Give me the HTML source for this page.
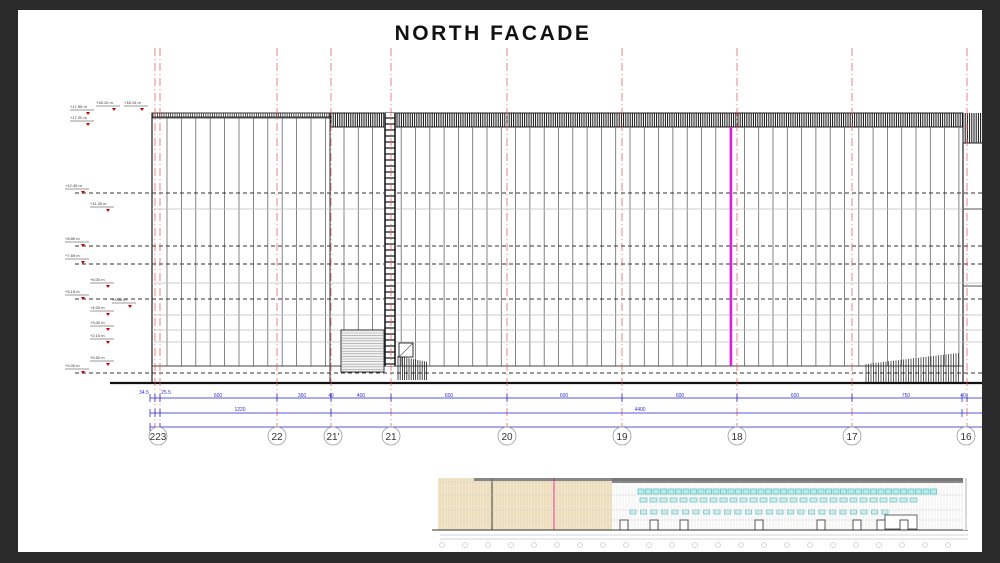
<!DOCTYPE html>
<html><head><meta charset="utf-8"><style>
html,body{margin:0;padding:0;background:#2b2b2b;width:1000px;height:563px;overflow:hidden}
#pg{position:absolute;left:18px;top:10px;width:964px;height:542px;background:#fff}
svg{position:absolute;left:0;top:0}
.t{font-family:"Liberation Sans",sans-serif}
</style></head><body>
<div id="pg"></div>
<svg id="s" width="1000" height="563" viewBox="0 0 1000 563">
<text x="493" y="40" text-anchor="middle" class="t" font-weight="bold" font-size="21" letter-spacing="2.5" fill="#111">NORTH FACADE</text>
</svg>
<script>
var s=document.getElementById('s'),h='';
function L(x1,y1,x2,y2,c,w,d){h+='<line x1="'+x1+'" y1="'+y1+'" x2="'+x2+'" y2="'+y2+'" stroke="'+c+'" stroke-width="'+(w||1)+'"'+(d?' stroke-dasharray="'+d+'"':'')+'/>';}
function R(x,y,w,hh,f,st){h+='<rect x="'+x+'" y="'+y+'" width="'+w+'" height="'+hh+'" fill="'+f+'"'+(st?' stroke="'+st+'" stroke-width="1"':'')+'/>';}
function T(x,y,t,sz,c,a){h+='<text x="'+x+'" y="'+y+'" font-size="'+sz+'" fill="'+c+'" class="t"'+(a?' text-anchor="'+a+'"':'')+'>'+t+'</text>';}
R(152,113,178,4,'#fff','#333');
for(var x=153;x<330;x+=2.2)L(x,113,x,117,'#333',0.8);
L(152,118,330,118,'#555',1);
R(330,113,633,14,'#fff','#222');
for(var x=331;x<963;x+=2.2)L(x,113,x,127,'#111',1);
for(var x=963;x<982;x+=2.2)L(x,113,x,143,'#111',1);
L(963,143,963,383,'#222',1.2);L(963,143,982,143,'#222',1);
L(152,113,152,383,'#222',1.2);L(330,118,330,383,'#333',1);
for(var x=167;x<330;x+=14.4)L(x,118,x,366,'#666',0.8);
for(var x=344;x<963;x+=14.3)L(x,127,x,366,'#666',0.8);
L(152,366,963,366,'#444',1);
[193,246,264,299,373].forEach(function(y){L(75,y,982,y,'#333',1,'4 3');});
[209,283,315,330,342].forEach(function(y){L(152,y,982,y,'#bbb',0.7);});
L(963,209,982,209,'#555',1);L(963,286,982,286,'#555',1);
L(110,383,982,383,'#111',2.2);
L(731,127,731,366,'#e01ce0',2.5);
R(384,113,12,253,'#fff');L(385,113,385,366,'#111',1.5);L(395,113,395,366,'#111',1.5);
for(var y=118;y<366;y+=6)L(385,y,395,y,'#111',1.2);
R(341,330,43,42,'#f2f2f2','#333');for(var y=333;y<372;y+=2.6)L(342,y,383,y,'#999',0.6);
R(399,343,14,14,'#fff','#333');L(399,357,413,343,'#555',0.6);
for(var x=398;x<428;x+=2.2)L(x,356+(x-398)*0.2,x,380,'#222',0.8);
for(var x=866;x<960;x+=2.5)L(x,364-(x-866)*0.12,x,382,'#333',0.8);
[155,160,277,331,391,507,622,737,852,967].forEach(function(x){L(x,48,x,428,'#e05050',0.7,'8 3 1 3');});
var lv=[[70,108,'+17.95 m'],[96,104,'+18.10 m'],[124,104,'+18.15 m'],[70,119,'+17.20 m'],[65,187,'+12.45 m'],[90,205,'+11.30 m'],[65,240,'+8.80 m'],[65,257,'+7.69 m'],[90,281,'+6.00 m'],[65,293,'+5.15 m'],[112,301,'+4.50 m'],[90,309,'+4.00 m'],[90,324,'+3.00 m'],[90,337,'+2.10 m'],[90,359,'+0.50 m'],[65,367,'+0.00 m']];
lv.forEach(function(a){T(a[0],a[1],a[2],4,'#333');L(a[0],a[1]+2,a[0]+24,a[1]+2,'#333',0.6);h+='<polygon points="'+(a[0]+16)+','+(a[1]+4)+' '+(a[0]+20)+','+(a[1]+4)+' '+(a[0]+18)+','+(a[1]+7)+'" fill="#c00"/>';});
[398,413,427].forEach(function(y){L(150,y,982,y,'#5555dd',1);});
[[150,398],[155,398],[160,398],[277,398],[331,398],[391,398],[507,398],[622,398],[737,398],[852,398],[962,398],[967,398],[150,413],[155,413],[160,413],[331,413],[962,413],[150,427],[160,427]].forEach(function(p){L(p[0],p[1]-4,p[0],p[1]+4,'#33c',0.8);});
[[144,394,'34.5'],[166,394,'25.5'],[218,397,'600'],[302,397,'360'],[331,397,'40'],[361,397,'400'],[449,397,'600'],[564,397,'600'],[680,397,'600'],[795,397,'600'],[906,397,'750'],[963,397,'40'],[240,411,'1220'],[640,411,'4400']].forEach(function(a){T(a[0],a[1],a[2],5,'#33c','middle');});
[[158,'223'],[277,'22'],[333,"21'"],[391,'21'],[507,'20'],[622,'19'],[737,'18'],[852,'17'],[966,'16']].forEach(function(a){h+='<circle cx="'+a[0]+'" cy="436" r="9" fill="#fff" stroke="#999" stroke-width="0.8"/>';T(a[0],440,a[1],10,'#333','middle');});
R(438,478,176,52,'#f3e6c8');
for(var x=440;x<614;x+=3)L(x,478,x,530,'#d9c9a3',0.5);
R(612,478,354,52,'#fff');
for(var x=614;x<966;x+=3)L(x,482,x,530,'#ddd',0.5);
R(474,478,492,3,'#888');R(612,478,354,5,'#777');
L(492,478,492,530,'#776',1.5);L(554,478,554,530,'#e08',0.8);
for(var i=0;i<40;i++){R(638+i*7.5,489,6,5,'#bfeaea','#7cc');}
for(var i=0;i<28;i++){R(640+i*10,498,7,4,'#cfeeee','#8cc');}
for(var i=0;i<25;i++){R(630+i*10.5,510,6,4,'#cfeeee','#8cc');}
[482,495,510,520].forEach(function(y){L(440,y,966,y,'#ccc',0.4);});
R(885,515,32,14,'#fff','#666');
[620,650,680,755,817,853,877,900].forEach(function(x){R(x,520,8,10,'#fff','#555');});
L(432,530,968,530,'#333',1);
L(440,535,968,535,'#aaa',0.5);L(440,539,968,539,'#aaa',0.5);
for(var x=442;x<968;x+=23)h+='<circle cx="'+x+'" cy="545" r="2.5" fill="none" stroke="#999" stroke-width="0.4"/>';
R(963,478,8,52,'#fff');L(966,478,966,530,'#666',0.5);
s.innerHTML+=h;
</script>
</body></html>
